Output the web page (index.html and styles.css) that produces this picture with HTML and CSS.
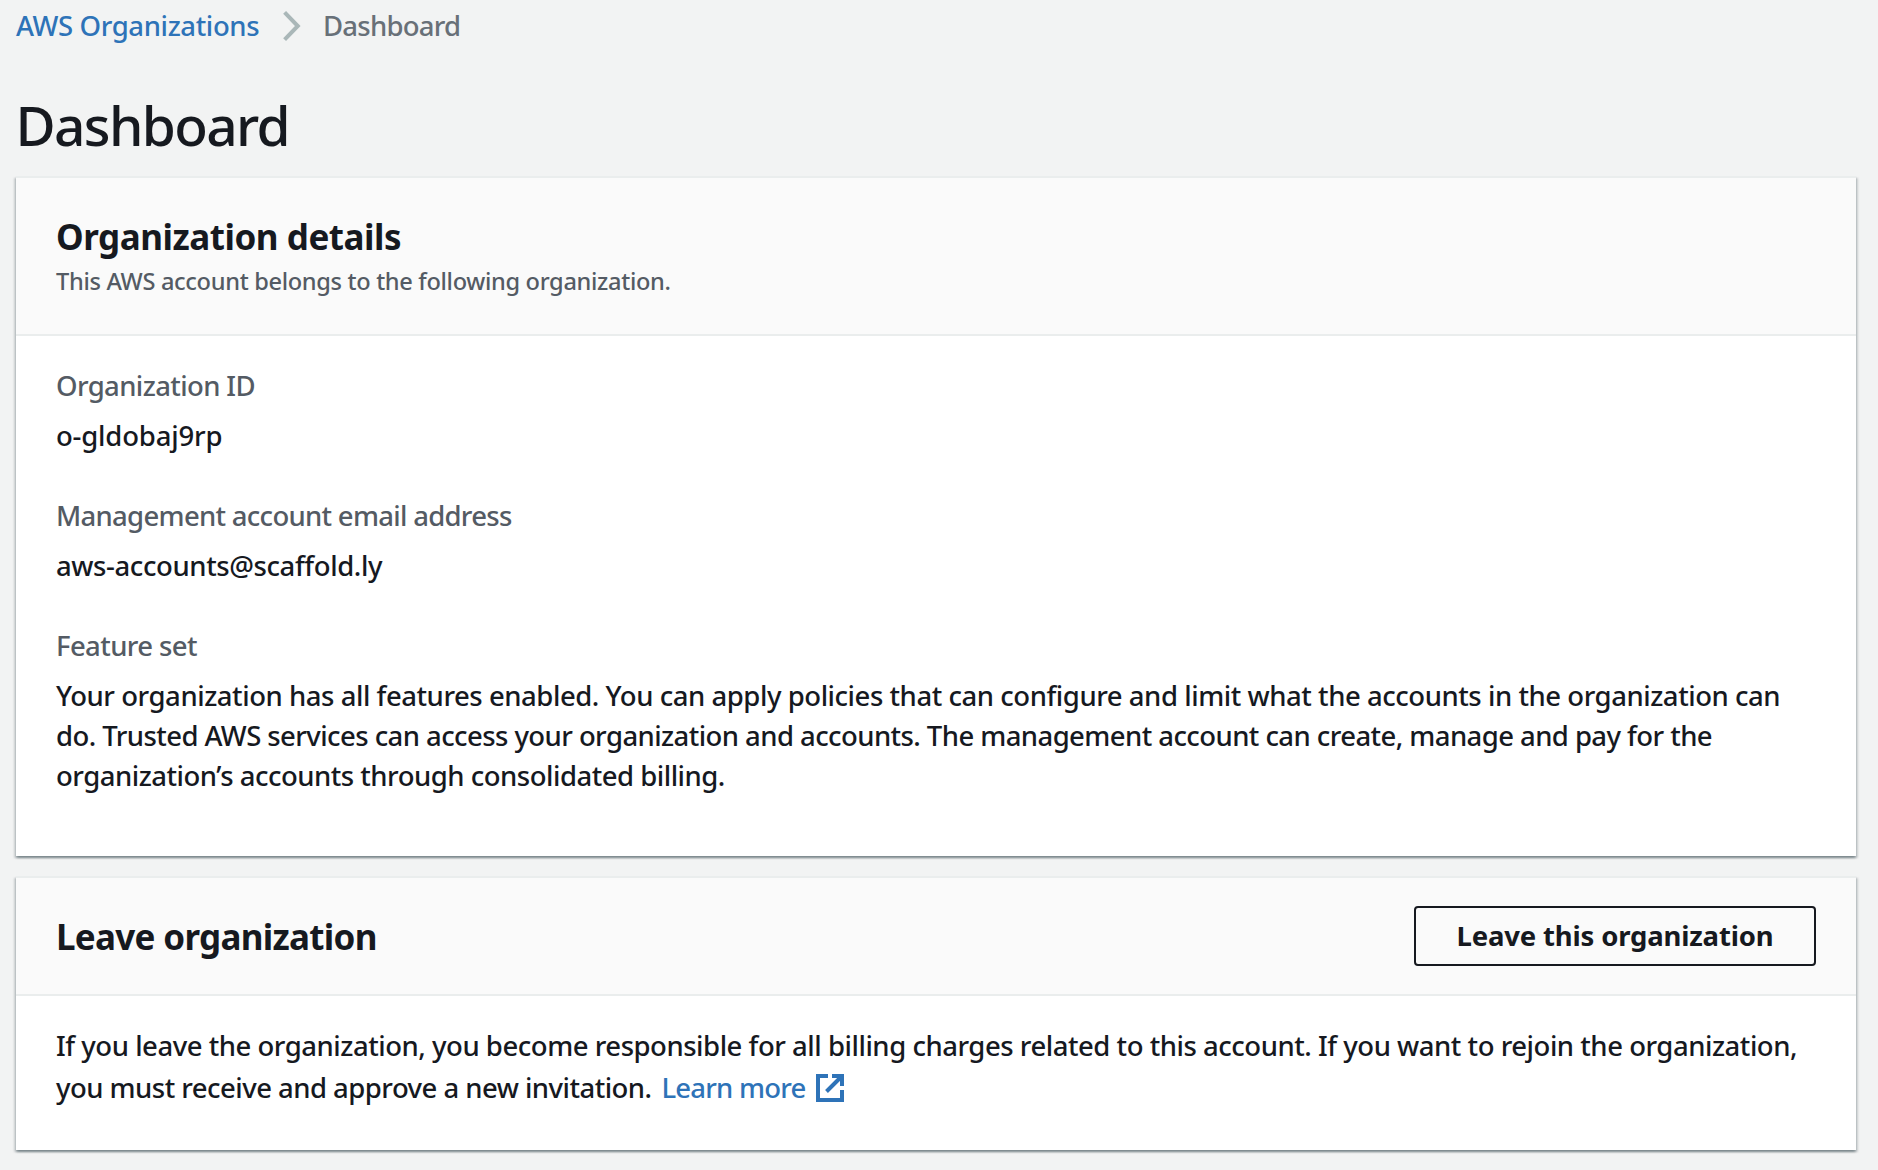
FILE: index.html
```
<!DOCTYPE html>
<html lang="en">
<head>
<meta charset="utf-8">
<title>Dashboard</title>
<link rel="stylesheet" href="styles.css">
</head>
<body>
<nav class="breadcrumb">
  <a class="crumb-link" href="#">AWS Organizations</a>
  <svg class="crumb-sep" width="18" height="32" viewBox="0 0 18 32" fill="none" stroke="#aab7b8" stroke-width="4"><path d="M1.6 2.4 14.8 16 1.6 29.6"/></svg>
  <span class="crumb-current">Dashboard</span>
</nav>
<main>
  <h1>Dashboard</h1>
  <section class="card">
    <header class="card-header">
      <div>
        <h2 class="title-details">Organization details</h2>
        <p class="description">This AWS account belongs to the following organization.</p>
      </div>
    </header>
    <dl class="details">
      <div>
        <dt class="label-id">Organization ID</dt>
        <dd class="value-id">o-gldobaj9rp</dd>
      </div>
      <div>
        <dt class="label-email">Management account email address</dt>
        <dd class="value-email">aws-accounts@scaffold.ly</dd>
      </div>
      <div>
        <dt class="label-feature">Feature set</dt>
        <dd class="value-feature">Your organization has all features enabled. You can apply policies that can configure and limit what the accounts in the organization can<br><span class="tight">do. Trusted AWS services can access your organization and accounts. The management account can create, manage and pay for the</span><br><span class="last">organization’s accounts through consolidated billing.</span></dd>
      </div>
    </dl>
  </section>
  <section class="card">
    <header class="card-header card-header-actions">
      <h2 class="title-leave">Leave organization</h2>
      <button class="button" type="button">Leave this organization</button>
    </header>
    <p class="leave-text">If you leave the organization, you become responsible for all billing charges related to this account. If you want to rejoin the organization,<br><span class="leave-second">you must receive and approve a new invitation.</span><a class="learn-more" href="#">Learn more<svg class="external" width="28" height="28" viewBox="0 0 28 28" fill="none" stroke="currentColor" stroke-width="4"><path d="M12 2H2v24h24V16M16 2h10v10M26 2 10.5 17.5"/></svg></a></p>
  </section>
</main>
</body>
</html>
```
FILE: styles.css
```
* { box-sizing: border-box; }

body {
  margin: 0;
  padding: 6px 22px 0 16px;
  height: 1170px;
  background: #f2f3f3;
  color: #16191f;
  font: 460 27.5px/40px "Noto Sans", "Open Sans", sans-serif;
  white-space: nowrap;
}

h1, h2, p, dl, dt, dd { margin: 0; }

a { color: #2e73b8; text-decoration: none; }

.breadcrumb { display: flex; align-items: center; height: 40px; }
.crumb-link { width: 267px; letter-spacing: -0.38px; }
.crumb-sep { flex: none; }
.crumb-current { margin-left: 22px; color: #687078; letter-spacing: -0.765px; }

h1 {
  margin: 45px 0 17px -0.5px;
  font-size: 55px;
  font-weight: 460;
  line-height: 68px;
  letter-spacing: -1.65px;
}

.card {
  background: #fff;
  border-top: 2px solid #eaeded;
  box-shadow: 0 2px 2px 0 rgba(0, 28, 36, 0.3), 2px 2px 2px 0 rgba(0, 28, 36, 0.15), -2px 2px 2px 0 rgba(0, 28, 36, 0.15);
}
.card + .card { margin-top: 20px; }

.card-header {
  padding: 37px 40px 35px;
  background: #fafafa;
  border-bottom: 2px solid #eaeded;
}
.card-header-actions {
  display: flex;
  align-items: center;
  justify-content: space-between;
  padding: 28px 40px;
}

h2 { font-size: 35px; font-weight: 700; line-height: 44px; }
.title-details { letter-spacing: -0.472px; }
.title-leave { padding-top: 2px; letter-spacing: -0.7px; }

.description {
  margin-top: 4px;
  font-size: 23.6px;
  line-height: 36px;
  color: #545b64;
  letter-spacing: -0.325px;
}

.details {
  display: flex;
  flex-direction: column;
  gap: 40px;
  padding: 30px 40px 60px;
}
dt { margin-bottom: 10px; color: #545b64; }
.label-id { letter-spacing: -0.62px; }
.value-id { letter-spacing: -0.186px; }
.label-email { letter-spacing: -0.706px; }
.value-email { letter-spacing: -0.4px; }
.label-feature { letter-spacing: -0.6px; }
.value-feature { letter-spacing: -0.453px; }
.tight { letter-spacing: -0.57px; }
.last { letter-spacing: -0.49px; }

.button {
  width: 402px;
  height: 60px;
  padding: 0;
  border: 2px solid #16191f;
  border-radius: 4px;
  background: transparent;
  color: #16191f;
  font: 700 27.5px/40px "Noto Sans", "Open Sans", sans-serif;
  letter-spacing: -0.18px;
}

.leave-text { padding: 29px 40px 41px; line-height: 42px; letter-spacing: -0.47px; }
.leave-second { letter-spacing: -0.53px; }
.learn-more { margin-left: 10px; letter-spacing: -0.796px; }
.external { margin-left: 11px; vertical-align: -4px; }
```
